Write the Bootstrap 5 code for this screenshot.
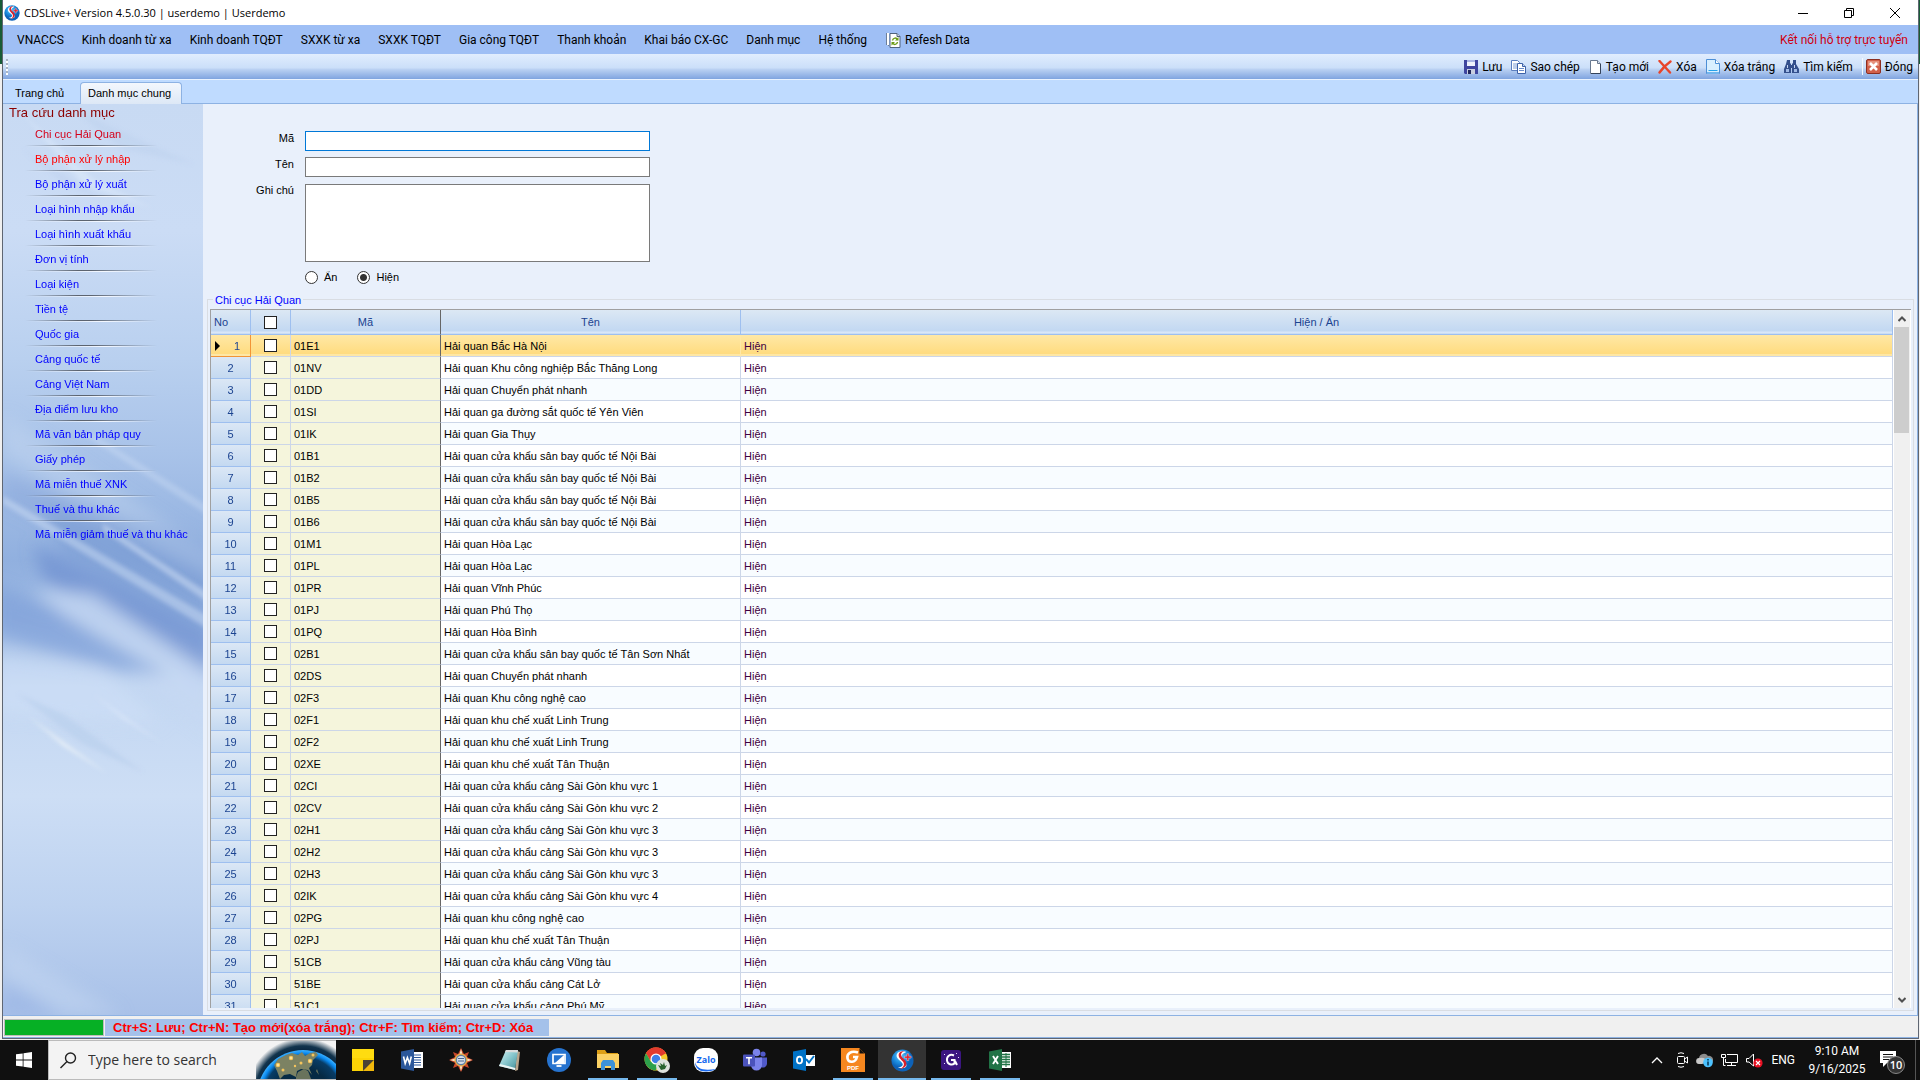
<!DOCTYPE html>
<html lang="vi">
<head>
<meta charset="utf-8">
<meta name="viewport" content="width=device-width, initial-scale=1">
<title>CDSLive+ Version 4.5.0.30</title>
<link href="https://cdn.jsdelivr.net/npm/bootstrap@5.3.0/dist/css/bootstrap.min.css" rel="stylesheet">
<style>
  :root { --form: "Liberation Sans", Arial, sans-serif; --ui: Roboto, "Noto Sans", sans-serif; --wide: "Open Sans", "Noto Sans", sans-serif; }
  body { font-family: var(--form); font-size: 11px; line-height: 16px; color: #000; background: #101010; }
  button { font: inherit; color: inherit; border: 0; background: none; padding: 0; }
  a { text-decoration: none; }
  svg { display: block; flex: none; }
  .desktop { min-height: 0; padding: 0 1px 1px 2px; background: linear-gradient(#185c37 64px, #f0f0f0 64px); }
  .app-window { min-width: 0; border: solid #5f6672; border-width: 0 1px 1px; background: #bfdbff; }
  .app-window > * { flex-shrink: 0; }
  .app-window > main { flex: 1 1 0; min-height: 0; }

  .title-bar { height: 25px; background: #fff; font: 11px/16px var(--wide); padding-left: 1px; }
  .title-bar button { width: 46px; height: 25px; display: grid; place-items: center; }

  .menu-strip { height: 29px; background: #9fbff5; font: 12px/16px var(--ui); padding: 1px 10px 0 14px; }
  .menu-strip .nav-link { padding: 0; color: #000; }
  .menu-items { gap: 18px; }
  .menu-strip .support { color: #d00010; }

  .tool-strip { height: 26px; font: 12px/16px var(--ui); border-bottom: 1px solid #e9f2ff; padding: 0 5px 0 3px;
    background: linear-gradient(#e1edfe, #cbdff9 55%, #b9d0f2 62%, #86a9e2 96%, #7da3de); }
  .tool-strip .grip { width: 2px; height: 16px; background: repeating-linear-gradient(#a9b4c4 0 2px, #fff 2px 4px); }
  .tool-strip button { gap: 4px; }
  .tools { gap: 9px; }
  .tool-sep { width: 1px; height: 17px; background: #f5faff; margin-right: -6px; }

  .tab-strip { height: 24px; border-bottom: 1px solid #8db2e3; padding-left: 12px; }
  .tab-strip .nav-link { color: #000; padding: 0; border: 0; margin: 0; }
  .tab-strip .first-tab { width: 65px; line-height: 20px; }
  .tab-strip .nav-link.active { height: 22px; width: 102px; margin-bottom: -1px; padding-left: 7px; line-height: 20px; border: 1px solid #8db2e3; border-bottom: 0;
    border-radius: 4px 4px 0 0; background: linear-gradient(#f3f7fd, #dde8f6); color: #000; }

  .side { width: 200px; overflow: hidden; }
  .side .backdrop { position: absolute; inset: 0; width: 100%; height: 100%; }
  .side h1 { font-size: 13px; line-height: 18px; margin: 0; padding: 0 0 1px 6px; color: #8b0000; font-weight: 400; }
  .side li { height: 25px; padding: 3px 0 0 32px; position: relative; }
  .side li:not(:last-child)::after { content: ""; position: absolute; left: 22px; bottom: 1px; width: 132px; height: 2px;
    background: linear-gradient(90deg, transparent, #5c6470 40%, #5c6470 50%, transparent) top / 100% 1px no-repeat,
      linear-gradient(90deg, transparent, #f4f8ff 60%, transparent) bottom / 100% 1px no-repeat; }
  .side a { color: #00f; white-space: nowrap; display: block; line-height: 16px; }
  .side .current { color: #d4001a; }
  .side .hot { color: #f00; }

  .content { background: #e9f0fb; min-width: 0; padding: 27px 3px 4px 4px; border-right: 1px solid #8db2e3; }
  .entry { display: grid; flex: none; grid-template-columns: 87px 345px; column-gap: 11px; row-gap: 6px; }
  .entry > label { text-align: right; line-height: 14px; }
  .entry .form-control { height: 20px; min-height: 0; padding: 0 3px; border: 1px solid #7a7a7a; border-radius: 0; font-size: 11px; line-height: 16px; resize: none; background: #fff; box-shadow: none; }
  .entry .form-control.first { border-color: #0078d7; }
  .entry textarea.form-control { height: 78px; margin-top: 1px; }
  .choices { gap: 20px; height: 18px; }
  .choices label { gap: 6px; line-height: 16px; }
  .choices input { appearance: none; width: 13px; height: 13px; margin: 0; border: 1px solid #333; border-radius: 50%; background: #fff; }
  .choices input:checked { background: radial-gradient(circle, #333 0 3px, #fff 4px); }

  .group { border: 1px solid #d9dde3; padding: 0 2px 2px; position: relative; margin-top: 13px; min-height: 0; }
  .group h2 { position: absolute; left: 5px; top: -8px; margin: 0; padding: 0 2px; font-size: 11px; line-height: 16px; font-weight: 400; color: #00f; background: #e9f0fb; }
  .grid-frame { margin-top: 9px; border: solid #a0a0a0; border-width: 1px 0 0 1px; background: #fff; min-height: 0; padding-right: 1px; }
  .grid-view { overflow: hidden; min-width: 0; }
  .grid-view table { table-layout: fixed; width: 100%; border-collapse: separate; border-spacing: 0; margin: 0; }
  .grid-view th { height: 25px; font-weight: 400; color: #1b4390; text-align: center; padding: 0; border-right: 1px solid #9ebfef; border-bottom: 1px solid #9ebfef;
    background: linear-gradient(#dce8f4, #c2d8f2 88%, #e0ebfa 92%, #c2d8f2); }
  .grid-view th:first-child { text-align: left; padding-left: 3px; }
  .grid-view td { height: 22px; line-height: 16px; padding: 0 3px; border-right: 1px solid #ccd6e8; border-bottom: 1px solid #ccd6e8; white-space: nowrap; overflow: hidden; }
  .grid-view th:nth-child(3), .grid-view td:nth-child(3) { border-right-color: #666; }
  .grid-view td:nth-child(1) { color: #1b4390; text-align: center; padding: 0; background: linear-gradient(#dbe7f5, #c4d9f1); border-color: #9ebfef; }
  .grid-view td:nth-child(2) { text-align: center; padding: 0; }
  .grid-view td:nth-child(2), .grid-view td:nth-child(3) { background: #f5f5dc; }
  .grid-view td:nth-child(5) { color: #400040; }
  .grid-view tr:nth-child(odd) td:nth-child(n+4) { background: #f8fcff; }
  .grid-view tbody tr.picked td:nth-child(n) { background: linear-gradient(#ffe8a6, #ffdc80 88%, #fee7a5 92%); }
  .grid-view tbody tr.picked td:first-child { border-color: #f29436; text-align: left; padding-left: 4px; }
  .grid-view tbody tr.picked td:nth-child(4) { border-right-color: #ffe8a6; }
  .picked svg { display: inline-block; vertical-align: -1px; margin-right: 13px; }
  .grid-view input { appearance: none; display: block; width: 13px; height: 13px; margin: 0 auto; background: #fff; border: 1px solid #222; border-radius: 0; }
  .bar-v { width: 16px; margin-left: 1px; background: #f0f0f0; }
  .bar-v button { height: 17px; display: grid; place-items: center; width: 100%; }
  .bar-v .thumb { height: 106px; width: 15px; background: #cdcdcd; }

  .status { height: 23px; border-top: 1px solid #8db2e3; background: #f0f0f0; border-bottom: 1px solid #8db2e3; padding: 3px 0 1px 1px; }
  .status .progress { width: 100px; height: 17px; border-radius: 0; border: 1px solid #bcbcbc; background: #fff; }
  .status .progress-bar { background: #06b025; }
  .status .hints { margin-left: 1px; padding: 0 16px 0 8px; line-height: 18px; font-size: 13px; font-weight: 700; color: #f00; background: #a4c1ea; }

  .task-bar { height: 40px; background: #101010; color: #fff; font: 12px/18px var(--ui); }
  .start { width: 48px; display: grid; place-items: center; }
  .search { width: 288px; background: #f3f3f3; border: solid #bbb; border-width: 1px 0 1px 1px; padding-left: 11px; gap: 11px; overflow: hidden; }
  .search input { border: 0; background: none; width: 157px; padding: 0; font: 14px/20px var(--wide); color: #333; outline: 0; }
  .search input::placeholder { color: #333; opacity: 1; }
  .apps { gap: 1px; padding-left: 3px; }
  .apps button { width: 48px; height: 40px; position: relative; display: grid; place-items: center; }
  .apps .open::after { content: ""; position: absolute; left: 4px; right: 4px; bottom: 0; height: 2px; background: #76b9ed; }
  .apps .front { background: #333; }
  .apps .front::after { left: 0; right: 0; }
  .tray { gap: 8px; }
  .clock { width: 68px; text-align: center; }
  .peek { width: 5px; border-left: 1px solid #555; }
</style>
</head>
<body class="vh-100 d-flex flex-column overflow-hidden">

<svg width="0" height="0" class="position-absolute" aria-hidden="true">
  <defs>
    <radialGradient id="orb" cx=".4" cy=".3"><stop offset="0" stop-color="#6cc8f8"/><stop offset=".6" stop-color="#1d8fe0"/><stop offset="1" stop-color="#0d62b8"/></radialGradient>
    <symbol id="brand" viewBox="0 0 24 24">
      <circle cx="12" cy="12" r="11.500" fill="url(#orb)"/>
      <path d="M7 4c3-2 7-2 9-1-3 1-6 3-5 6 1 4 6 5 5 9-1 2-5 3-9 1 4 0 6-2 5-4C10 12 3 9 7 4z" fill="#fff"/>
      <path d="M14 2C9 2 7 5 8.500 8.500c1.500 3 5 4 5 7.500 0 2-2 4-4 5 5-1 8-4 6-8-1.500-3-5-4-5-7 0-2 1.500-3 3.500-4z" fill="#d8202c"/>
      <path d="M16.500 5h2v2.500H21v2h-2.500V12h-2V9.500H14v-2h2.500z" fill="#e01f2c" stroke="#fff" stroke-width=".4"/>
    </symbol>
  </defs>
</svg>

<div class="desktop flex-grow-1 d-flex">
<div class="app-window flex-grow-1 d-flex flex-column">

  <header class="title-bar d-flex align-items-center">
    <svg width="16" height="16"><use href="#brand"/></svg>
    <span class="ms-1 me-auto">CDSLive+ Version 4.5.0.30 | userdemo | Userdemo</span>
    <button aria-label="Minimize"><svg width="10" height="10"><path d="M0 5.500h10" stroke="#000"/></svg></button>
    <button aria-label="Restore"><svg width="10" height="10" fill="none" stroke="#000"><path d="M.5 2.500h7v7h-7zM2.500 2.500v-2h7v7h-2"/></svg></button>
    <button aria-label="Close"><svg width="10" height="10"><path d="M0 0l10 10M10 0L0 10" stroke="#000"/></svg></button>
  </header>

  <nav class="menu-strip d-flex align-items-center">
    <div class="menu-items nav flex-nowrap flex-grow-1 text-nowrap align-items-center">
      <a class="nav-link" href="#">VNACCS</a>
      <a class="nav-link" href="#">Kinh doanh từ xa</a>
      <a class="nav-link" href="#">Kinh doanh TQĐT</a>
      <a class="nav-link" href="#">SXXK từ xa</a>
      <a class="nav-link" href="#">SXXK TQĐT</a>
      <a class="nav-link" href="#">Gia công TQĐT</a>
      <a class="nav-link" href="#">Thanh khoản</a>
      <a class="nav-link" href="#">Khai báo CX-GC</a>
      <a class="nav-link" href="#">Danh mục</a>
      <a class="nav-link" href="#">Hệ thống</a>
      <a class="nav-link d-flex align-items-center gap-1" href="#">
        <svg width="16" height="16"><path d="M1.500 1v12M3.500 1v13" stroke="#6d7f99"/><path d="M2 1h2v12H2z" fill="#fff"/><path d="M5 1.500h7l3 3v11H5z" fill="#fff" stroke="#50627c"/><path d="M12 1.500v3h3" fill="#cfd8e6" stroke="#50627c"/><path d="M7.500 8.500c.5-3 4-3 5-1M12.500 10c-.5 3-4 3-5 1" fill="none" stroke="#6a9a14" stroke-width="1.500"/><path d="M13.500 5v3.500H10zM6.500 13.500V10H10z" fill="#6a9a14"/></svg>
        Refesh Data</a>
    </div>
    <a class="support" href="#">Kết nối hỗ trợ trực tuyến</a>
  </nav>

  <div class="tool-strip d-flex align-items-center">
    <span class="grip me-auto"></span>
    <div class="tools d-flex align-items-center text-nowrap">
      <button class="d-flex align-items-center"><svg width="14" height="14"><path d="M0 0h14v14H1l-1-1z" fill="#3e459f"/><path d="M3 0h8v6H3z" fill="#eef2fc"/><path d="M3 0h8v2H3z" fill="#a9b6e4"/><path d="M3 9h8v5H3z" fill="#c9cfe0"/><path d="M4 10h3v4H4z" fill="#22285e"/></svg>Lưu</button>
      <button class="d-flex align-items-center"><svg width="15" height="14"><path d="M.5.500h6l2 2v8h-8z" fill="#fff" stroke="#5b7fc0"/><path d="M2 4h4M2 6h4M2 8h4" stroke="#7f9ed4"/><path d="M6.500 3.500h5l3 3v7h-8z" fill="#fff" stroke="#3d62a8"/><path d="M11.500 3.500v3h3" fill="#c5d5ef" stroke="#3d62a8"/><path d="M8 8.500h5M8 10.500h5" stroke="#6a8cca"/></svg>Sao chép</button>
      <button class="d-flex align-items-center"><svg width="13" height="14"><path d="M1.500.500h7l3 3v10h-10z" fill="#fff" stroke="#68788f"/><path d="M8.500.500v3h3" fill="#dde6f2" stroke="#68788f"/><path d="M11.500 4v9.500H2" fill="none" stroke="#34435a"/></svg>Tạo mới</button>
      <button class="d-flex align-items-center"><svg width="14" height="14"><path d="M1.500 1L12 12.500M12.500 1.500Q6 6 1.500 12.500" stroke="#e8442a" stroke-width="2.400" stroke-linecap="round" fill="none"/></svg>Xóa</button>
      <button class="d-flex align-items-center"><svg width="14" height="15"><path d="M.5.500h9l4 4v10H.5z" fill="#d9efff" stroke="#4d8fd6"/><path d="M9.500.500v4h4" fill="#fff" stroke="#4d8fd6"/><path d="M2.500 11.500h9" stroke="#25a3ec"/><path d="M1 13h12v2H1z" fill="#72b4ec"/></svg>Xóa trắng</button>
      <button class="d-flex align-items-center"><svg width="15" height="14" fill="#34508c"><path d="M3 0h3v3l1 1v9H0V9l2-5zM9 0h3v4l3 5v4H8V4l1-1z"/><path d="M6 5h3v3H6z"/><path d="M2 9h3v3H2zM10 9h3v3h-3z" fill="#9fb9e6"/><path d="M3 5h1v3H3zM10 5h1v3h-1z" fill="#c6d6f2"/></svg>Tìm kiếm</button>
      <span class="tool-sep"></span>
      <button class="d-flex align-items-center"><svg width="15" height="15"><rect x=".5" y=".5" width="14" height="14" rx="1.500" fill="#d2604a" stroke="#8c2f22"/><path d="M2 2h11v5H2z" fill="#e5917d"/><path d="M4 4l7 7M11 4l-7 7" stroke="#fff" stroke-width="2.600"/></svg>Đóng</button>
    </div>
  </div>

  <nav class="tab-strip nav align-items-end">
    <a class="nav-link first-tab" href="#">Trang chủ</a>
    <a class="nav-link active" href="#">Danh mục chung</a>
  </nav>

  <main class="d-flex">
    <aside class="side position-relative flex-shrink-0">
      <svg class="backdrop" viewBox="0 0 200 911" preserveAspectRatio="none" aria-hidden="true">
        <defs>
          <linearGradient id="sky" x2="0" y2="1">
            <stop offset="0" stop-color="#c8daf3"/><stop offset=".14" stop-color="#cbdcf5"/><stop offset=".28" stop-color="#b9d0ef"/>
            <stop offset=".38" stop-color="#a9c3e9"/><stop offset=".5" stop-color="#91b0df"/><stop offset=".56" stop-color="#9ab7e3"/>
            <stop offset=".64" stop-color="#c3d7f2"/><stop offset=".76" stop-color="#cddef5"/><stop offset=".88" stop-color="#bdd2f0"/><stop offset="1" stop-color="#a9c1e8"/>
          </linearGradient>
          <filter id="soft" x="-20%" y="-20%" width="140%" height="140%"><feGaussianBlur stdDeviation="8"/></filter>
          <filter id="thin" x="-20%" y="-20%" width="140%" height="140%"><feGaussianBlur stdDeviation="2"/></filter>
        </defs>
        <rect width="200" height="911" fill="url(#sky)"/>
        <g filter="url(#soft)">
          <path d="M0 310L210 450V480L0 350z" fill="#c3d6f0" opacity=".45"/>
          <path d="M0 370L210 440V500L0 400z" fill="#7f9fd6" opacity=".35"/>
          <path d="M40 400L210 470V540L60 450z" fill="#7697d2" opacity=".5"/>
          <path d="M30 440L210 530V580L40 475z" fill="#7092d0" opacity=".75"/>
          <path d="M30 485L90 490L210 570V630L130 570z" fill="#c6d8f2" opacity=".8"/>
          <path d="M-10 480L50 505L165 570L110 565L-10 530z" fill="#7f9fd8" opacity=".7"/>
          <path d="M-10 550L100 565L160 620L-10 610z" fill="#cfdff6" opacity=".6"/>
          <path d="M0 840L120 911H60L0 870z" fill="#c4d7f1" opacity=".5"/>
          <path d="M0 880L60 911H0z" fill="#9bb7e5" opacity=".7"/>
        </g>
        <g filter="url(#thin)">
          <path d="M0 392L210 515V528L0 400z" fill="#dce9fa" opacity=".4"/>
          <path d="M90 330L210 405V415L80 330z" fill="#dbe8fa" opacity=".3"/>
          <path d="M100 420L210 492V502L100 426z" fill="#d5e3f7" opacity=".5"/>
          <path d="M20 10L90 75L150 105L80 80z" fill="#e4effc" opacity=".4"/>
          <path d="M70 5L190 60L120 45z" fill="#b5ccec" opacity=".3"/>
          <path d="M20 45L100 95L60 80z" fill="#b9cfee" opacity=".35"/>
          <path d="M15 590L60 610L140 668L80 640z" fill="#b5cdec" opacity=".5"/>
          <path d="M25 612L105 670L60 642z" fill="#edf4f8" opacity=".8"/>
          <path d="M90 590L160 640L120 615z" fill="#e2edfb" opacity=".6"/>
        </g>
      </svg>
      <div class="position-relative">
        <h1>Tra cứu danh mục</h1>
        <ul class="list-unstyled m-0">
          <li><a class="current" href="#">Chi cục Hải Quan</a></li>
          <li><a class="hot" href="#">Bộ phận xử lý nhập</a></li>
          <li><a href="#">Bộ phận xử lý xuất</a></li>
          <li><a href="#">Loại hình nhập khẩu</a></li>
          <li><a href="#">Loại hình xuất khẩu</a></li>
          <li><a href="#">Đơn vị tính</a></li>
          <li><a href="#">Loại kiện</a></li>
          <li><a href="#">Tiền tệ</a></li>
          <li><a href="#">Quốc gia</a></li>
          <li><a href="#">Cảng quốc tế</a></li>
          <li><a href="#">Cảng Việt Nam</a></li>
          <li><a href="#">Địa điểm lưu kho</a></li>
          <li><a href="#">Mã văn bản pháp quy</a></li>
          <li><a href="#">Giấy phép</a></li>
          <li><a href="#">Mã miễn thuế XNK</a></li>
          <li><a href="#">Thuế và thu khác</a></li>
          <li><a href="#">Mã miễn giảm thuế và thu khác</a></li>
        </ul>
      </div>
    </aside>

    <section class="content flex-grow-1 d-flex flex-column">
      <form class="entry">
        <label for="code">Mã</label><input id="code" class="form-control first">
        <label for="name">Tên</label><input id="name" class="form-control">
        <label for="note">Ghi chú</label><textarea id="note" class="form-control"></textarea>
        <span></span>
        <div class="choices d-flex align-items-center">
          <label class="d-flex align-items-center"><input type="radio" name="vis">Ẩn</label>
          <label class="d-flex align-items-center"><input type="radio" name="vis" checked>Hiện</label>
        </div>
      </form>

      <div class="group flex-grow-1 d-flex flex-column">
        <h2>Chi cục Hải Quan</h2>
        <div class="grid-frame flex-grow-1 d-flex">
          <div class="grid-view flex-grow-1">
            <table>
              <colgroup><col style="width:40px"><col style="width:40px"><col style="width:150px"><col style="width:300px"><col></colgroup>
              <thead><tr><th>No</th><th><input type="checkbox" aria-label="Chọn tất cả"></th><th>Mã</th><th>Tên</th><th>Hiện / Ẩn</th></tr></thead>
              <tbody id="rows"></tbody>
            </table>
          </div>
          <div class="bar-v flex-shrink-0 d-flex flex-column">
            <button aria-label="Lên"><svg width="8" height="6"><path d="M.5 5L4 1.500 7.500 5" fill="none" stroke="#505050" stroke-width="2"/></svg></button>
            <div class="thumb mb-auto"></div>
            <button aria-label="Xuống"><svg width="8" height="6"><path d="M.5 1L4 4.500 7.500 1" fill="none" stroke="#505050" stroke-width="2"/></svg></button>
          </div>
        </div>
      </div>
    </section>
  </main>

  <footer class="status d-flex">
    <div class="progress"><div class="progress-bar w-100"></div></div>
    <div class="hints">Ctr+S: Lưu; Ctr+N: Tạo mới(xóa trắng); Ctr+F: Tìm kiếm; Ctr+D: Xóa</div>
  </footer>
</div>
</div>

<div class="task-bar d-flex flex-shrink-0">
  <button class="start" aria-label="Start"><svg width="16" height="16" fill="#fff"><path d="M0 2.300L6.700 1.400V7.600H0zM7.500 1.300L16 0v7.600H7.500zM0 8.400h6.700v6.200L0 13.700zM7.500 8.400H16V16l-8.500-1.300z"/></svg></button>
  <div class="search d-flex align-items-center">
    <svg width="17" height="17" fill="none" stroke="#222" stroke-width="1.400"><circle cx="10.500" cy="6" r="5"/><path d="M7 9.500L.5 16"/></svg>
    <input type="text" placeholder="Type here to search" aria-label="Search">
    <svg width="80" height="38" viewBox="0 0 80 38">
      <defs>
        <radialGradient id="halo" cx="47" cy="53" r="56" gradientUnits="userSpaceOnUse"><stop offset=".75" stop-color="#06233e"/><stop offset=".86" stop-color="#12344d"/><stop offset="1" stop-color="#f3f3f3"/></radialGradient>
        <radialGradient id="sea" cx="47" cy="55" r="46" gradientUnits="userSpaceOnUse"><stop offset=".6" stop-color="#062a44"/><stop offset=".84" stop-color="#083c66"/><stop offset=".93" stop-color="#0a8af0"/><stop offset="1" stop-color="#3bb0ff"/></radialGradient>
        <filter id="mild"><feGaussianBlur stdDeviation=".6"/></filter>
      </defs>
      <rect width="80" height="38" fill="url(#halo)"/>
      <circle cx="47" cy="55" r="46" fill="url(#sea)"/>
      <g filter="url(#mild)">
        <path d="M18 24l4-6 8-4 6-2 6 2 4-3 3 4 5-3 6-1 2 3-5 5-1 5-3 3 3 7-4-5-7-1-4 2-1 6-6-3-6 1-4 4-3-8z" fill="#7c8264"/>
        <path d="M40 36l2-5 6-3 4 2 3 8H40zM60 30l3 4-2-6z" fill="#69735c"/>
        <g fill="#f5c55c"><circle cx="22" cy="24" r="2.200"/><circle cx="35" cy="17" r="2.200"/><circle cx="27" cy="29" r="1.500"/><circle cx="45" cy="22" r="1.500"/><circle cx="54" cy="20" r="2.200"/><circle cx="57" cy="14" r="1.500"/><circle cx="39" cy="25" r="1.200"/></g>
        <g fill="#fff1b8"><circle cx="22" cy="24" r=".9"/><circle cx="35" cy="17" r=".9"/><circle cx="54" cy="20" r=".9"/></g>
      </g>
    </svg>
  </div>
  <div class="apps d-flex me-auto">
    <button aria-label="Sticky Notes"><svg width="22" height="22"><path d="M0 0h22v11l-11 11H0z" fill="#fcd405"/><path d="M0 0h22v9H0z" fill="#ffdc10"/><path d="M11 11h11L11 22z" fill="#4a4335"/><path d="M22 11v11H11z" fill="#f2b90c"/></svg></button>
    <button aria-label="Word"><svg width="22" height="22"><path d="M11 3h11v16H11z" fill="#fff"/><path d="M13 6h7M13 8.500h7M13 11h7M13 13.500h7M13 16h7" stroke="#2b579a" stroke-width="1.200"/><path d="M0 2.500L13 0v22L0 19.500z" fill="#2b579a"/><path d="M2.500 7.500l1.700 7 2.200-6 2.200 6 1.700-7" fill="none" stroke="#fff" stroke-width="1.600"/></svg></button>
    <button aria-label="Compass"><svg width="24" height="24" viewBox="-12 -12 24 24"><path d="M0-12L3-6 8-8 6-3 12 0 6 3 8 8 3 6 0 12-3 6-8 8-6 3-12 0-6-3-8-8-3-6z" fill="#c9472a"/><path d="M0-11L1.500-6H-1.500zM0 11L1.500 6H-1.500zM-11 0L-6-1.500V1.500zM11 0L6-1.500V1.500z" fill="#f7e3c1"/><circle r="6.500" fill="#e5ae49"/><circle r="5.200" fill="#5c7ea8"/><circle r="4" fill="#d5dfe9"/><path d="M-3-1.500h6M-3 1h6" stroke="#4a6790"/></svg></button>
    <button aria-label="Notepad"><svg width="24" height="24"><defs><linearGradient id="pad" x2="1" y2="1"><stop stop-color="#d8f3f5"/><stop offset=".5" stop-color="#86c6cc"/><stop offset="1" stop-color="#3f8a94"/></linearGradient></defs><path d="M19 3l3 1-2 18-3 1z" fill="#b9a58c"/><path d="M8 2h12l-3 20L1 18z" fill="url(#pad)"/><path d="M8 2h12l-.4 2.500L7 4z" fill="#d9dcdc"/><path d="M1 18l16 4 .3-2L2 16z" fill="#eaf4f4"/></svg></button>
    <button aria-label="Remote"><svg width="24" height="24"><circle cx="12" cy="12" r="12" fill="#2673cf"/><path d="M6 6.500h12v9H6z" fill="none" stroke="#fff" stroke-width="1.700"/><path d="M17 7v8H8z" fill="#fff"/><path d="M9.500 18h5" stroke="#fff" stroke-width="1.800"/></svg></button>
    <button class="open" aria-label="Explorer"><svg width="22" height="20"><path d="M0 0h8l2 3h11v5H0z" fill="#dd9f16"/><path d="M0 4h22v14H0z" fill="#fbd164"/><path d="M4 20v-7l2-3h10l2 3v7h-4v-4H8v4z" fill="#3d92d8"/></svg></button>
    <button class="open" aria-label="Chrome"><svg width="26" height="26"><circle cx="12" cy="12" r="11.500" fill="#f7c92c"/><path d="M12 12L2 6.300A11.500 11.500 0 0 1 22 6.300z" fill="#e33b2e"/><path d="M12 6.300h10A11.500 11.500 0 0 0 2 6.300l4 7z" fill="#e33b2e"/><path d="M2 6.300A11.500 11.500 0 0 0 11.500 23.500L16.500 15 7 15z" fill="#2da04c"/><circle cx="12" cy="12" r="5.500" fill="#fff"/><circle cx="12" cy="12" r="4.300" fill="#3f7fe8"/><circle cx="19" cy="19" r="7" fill="#dfe3de"/><path d="M14 18l3 1-1-3 3 2 1-3 1 4 2-1-2 4-4 1z" fill="#29632e"/></svg></button>
    <button aria-label="Zalo"><svg width="24" height="24"><rect width="24" height="24" rx="9" fill="#fff"/><path d="M1 14c2 7 8 9 21 7-4 3-16 4-19-1-1-1-2-3-2-6z" fill="#1a6bf0"/><text x="12" y="15" text-anchor="middle" font-family="Open Sans, sans-serif" font-size="9" font-weight="700" fill="#1468ee">Zalo</text></svg></button>
    <button aria-label="Teams"><svg width="24" height="24"><circle cx="20" cy="6" r="2.600" fill="#5059c9"/><circle cx="13.500" cy="4.500" r="3.800" fill="#7b83eb"/><path d="M17 9.500h7V16a4 4 0 0 1-6 3z" fill="#5059c9"/><path d="M8 9.500h11V17a5.500 5.500 0 0 1-11 0z" fill="#7b83eb"/><rect y="6.500" width="12" height="12" rx="1" fill="#4b53bc"/><path d="M3 9.700h6M6 9.700v6.600" stroke="#fff" stroke-width="1.600"/></svg></button>
    <button aria-label="Outlook"><svg width="22" height="22"><path d="M12 6h10v11H12z" fill="#fff"/><path d="M13 10l3 3.500L21 7" fill="none" stroke="#0072c6" stroke-width="2"/><path d="M0 2.500L13 0v22L0 19.500z" fill="#0072c6"/><ellipse cx="6.500" cy="11" rx="2.600" ry="3.400" fill="none" stroke="#fff" stroke-width="1.800"/></svg></button>
    <button class="open" aria-label="PDF"><svg width="24" height="24"><path d="M0 0h18l6 6v18H0z" fill="#f6871f"/><path d="M18 0v6h6" fill="#111" stroke="#f6871f"/><path d="M17 4.500C10 2 5.500 6 6.500 10.500c1 4.500 8 4.500 9.500-1.500h-4" fill="none" stroke="#fff" stroke-width="2.600"/><text x="12" y="22" text-anchor="middle" font-family="Liberation Sans, sans-serif" font-size="6" font-weight="700" fill="#fff">PDF</text></svg></button>
    <button class="open front" aria-label="CDSLive"><svg width="23" height="23"><use href="#brand"/></svg></button>
    <button class="open" aria-label="G"><svg width="20" height="20"><rect width="20" height="20" rx="3" fill="#3b1680"/><path d="M13 5.500C9 3.500 5.500 6.500 6 10.500s5 5 7.500 3V10H10M14 11l2 4" fill="none" stroke="#fff" stroke-width="2"/><path d="M3 4h1v1H3zM15 3h1v1h-1zM3 13h1v1H3zM17 7h1v1h-1z" fill="#e9dcff"/></svg></button>
    <button class="open" aria-label="Excel"><svg width="22" height="22"><path d="M12 3h10v16H12z" fill="#fff"/><path d="M13 5.500h8M13 8h8M13 10.500h8M13 13h8M13 15.500h8" stroke="#217346" stroke-width="1.300"/><path d="M17 4v14" stroke="#217346"/><path d="M0 2.500L13 0v22L0 19.500z" fill="#217346"/><path d="M4 7l5 8M9 7l-5 8" stroke="#fff" stroke-width="1.900"/></svg></button>
  </div>
  <div class="tray d-flex align-items-center">
    <svg class="me-1" width="12" height="8"><path d="M1 7l5-5 5 5" fill="none" stroke="#fff" stroke-width="1.300"/></svg>
    <svg width="13" height="16" fill="none" stroke="#fff"><rect x="2.500" y="4.500" width="7" height="7" rx="1"/><path d="M9.500 7l3-2v6l-3-2M3 1.500Q6 0 9 1.500M3 14.500Q6 16 9 14.500"/></svg>
    <svg width="17" height="16"><path d="M3 12a3 3 0 0 1 0-6 5 5 0 0 1 9-2 4 4 0 0 1 2 8z" fill="#8c8c8c"/><path d="M3 12a3 3 0 0 1 1-6q4-1 6 2l-4 4z" fill="#c9c9c9"/><circle cx="12" cy="10.500" r="4.800" fill="#4cc2ff"/><path d="M12 9.500v4M12 7v1.500" stroke="#00304f" stroke-width="1.500"/></svg>
    <svg width="17" height="14" fill="none" stroke="#fff"><path d="M6 1.500h10.500v8h-12V6M10.500 9.500v3M6 12.500h9M.5 1.500h4v3h-4zM2.500 4.500v8h2"/></svg>
    <svg width="17" height="15"><path d="M.5 5.500H3L7.500 1v12L3 9H.5z" fill="none" stroke="#fff"/><circle cx="12" cy="10" r="4.600" fill="#e81123"/><path d="M10 8l4 4M14 8l-4 4" stroke="#fff" stroke-width="1.200"/></svg>
    <span>ENG</span>
    <div class="clock">9:10 AM<br>9/16/2025</div>
    <svg width="28" height="28"><path d="M1 5h16v12H8l-4 4v-4H1z" fill="#fff"/><path d="M4 8.500h10M4 11h10M4 13.500h6" stroke="#101010"/><circle cx="17" cy="19" r="8.500" fill="#333" stroke="#888"/><text x="17" y="23" text-anchor="middle" font-family="Open Sans, sans-serif" font-size="11" font-weight="600" fill="#fff">10</text></svg>
    <div class="peek align-self-stretch"></div>
  </div>
</div>

<script src="https://cdn.jsdelivr.net/npm/bootstrap@5.3.0/dist/js/bootstrap.bundle.min.js"></script>
<script>
  const offices = [
    ["01E1", "Bắc Hà Nội"], ["01NV", "Khu công nghiệp Bắc Thăng Long"], ["01DD", "Chuyển phát nhanh"],
    ["01SI", "ga đường sắt quốc tế Yên Viên"], ["01IK", "Gia Thụy"], ["01B1", "cửa khẩu sân bay quốc tế Nội Bài"],
    ["01B2", "cửa khẩu sân bay quốc tế Nội Bài"], ["01B5", "cửa khẩu sân bay quốc tế Nội Bài"], ["01B6", "cửa khẩu sân bay quốc tế Nội Bài"],
    ["01M1", "Hòa Lạc"], ["01PL", "Hòa Lạc"], ["01PR", "Vĩnh Phúc"], ["01PJ", "Phú Thọ"], ["01PQ", "Hòa Bình"],
    ["02B1", "cửa khẩu sân bay quốc tế Tân Sơn Nhất"], ["02DS", "Chuyển phát nhanh"], ["02F3", "Khu công nghệ cao"],
    ["02F1", "khu chế xuất Linh Trung"], ["02F2", "khu chế xuất Linh Trung"], ["02XE", "khu chế xuất Tân Thuận"],
    ["02CI", "cửa khẩu cảng Sài Gòn khu vực 1"], ["02CV", "cửa khẩu cảng Sài Gòn khu vực 2"], ["02H1", "cửa khẩu cảng Sài Gòn khu vực 3"],
    ["02H2", "cửa khẩu cảng Sài Gòn khu vực 3"], ["02H3", "cửa khẩu cảng Sài Gòn khu vực 3"], ["02IK", "cửa khẩu cảng Sài Gòn khu vực 4"],
    ["02PG", "khu công nghệ cao"], ["02PJ", "khu chế xuất Tân Thuận"], ["51CB", "cửa khẩu cảng Vũng tàu"],
    ["51BE", "cửa khẩu cảng Cát Lở"], ["51C1", "cửa khẩu cảng Phú Mỹ"]
  ];
  const marker = '<svg width="6" height="10"><path d="M0 0l5 5-5 5z"/></svg>';
  document.getElementById("rows").innerHTML = offices.map(([code, name], i) =>
    `<tr class="${i ? "" : "picked"}"><td>${i ? "" : marker}${i + 1}</td><td><input type="checkbox" aria-label="${code}"></td><td>${code}</td><td>Hải quan ${name}</td><td>Hiện</td></tr>`).join("");
</script>
</body>
</html>
